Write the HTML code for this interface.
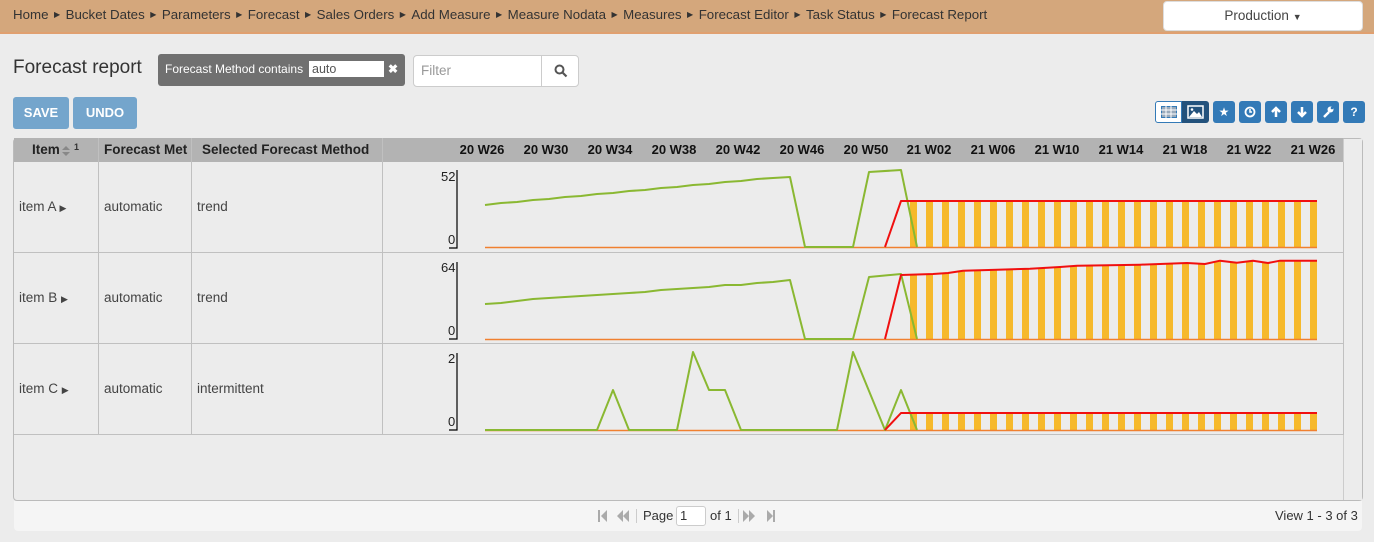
<!DOCTYPE html>
<html><head><meta charset="utf-8"><style>
*{box-sizing:border-box;margin:0;padding:0}
body{width:1374px;height:542px;background:#ececec;font-family:"Liberation Sans",sans-serif;position:relative;overflow:hidden;color:#333}
.a{position:absolute}
.nav{left:0;top:0;width:1374px;height:34px;background:#d4a77c;border-bottom:2px solid #e0a070}
.crumb{left:13px;top:7px;font-size:13.3px;color:#333;white-space:nowrap}
.crumb i{font-style:normal;font-size:8px;margin:0 5.5px;position:relative;top:-2px}
.prod{left:1163px;top:1px;width:200px;height:30px;background:#fff;border-radius:4px;border:1px solid #ddd;text-align:center;font-size:13.5px;line-height:28px;color:#444}
.btn{background:#74a5cc;color:#fff;font-weight:bold;font-size:13px;text-align:center;border-radius:3px}
.ib{width:22px;height:22px;background:#337ab7;border-radius:3px;color:#fff;font-size:12px;text-align:center;line-height:22px;top:101px}
.hd{top:138px;height:24px;background:#b3b3b3;font-weight:bold;font-size:13.5px;color:#222;line-height:24px}
.cell{font-size:13.5px;color:#444}
.vl{width:1px;background:#c0c0c0}
.hl{height:1px;background:#c0c0c0}
.wk{top:138px;font-weight:bold;font-size:13px;line-height:24px;color:#111;width:64px;text-align:center}
</style></head><body>
<div class="a nav"></div>
<div class="a crumb">Home<i>▶</i>Bucket Dates<i>▶</i>Parameters<i>▶</i>Forecast<i>▶</i>Sales Orders<i>▶</i>Add Measure<i>▶</i>Measure Nodata<i>▶</i>Measures<i>▶</i>Forecast Editor<i>▶</i>Task Status<i>▶</i>Forecast Report</div>
<div class="a prod">Production <span style="font-size:9px">▼</span></div>

<div class="a" style="left:13px;top:57px;font-size:19px;color:#333">Forecast report</div>
<div class="a" style="left:158px;top:54px;width:247px;height:32px;background:#707070;border-radius:3px"></div>
<div class="a" style="left:165px;top:62px;font-size:12px;color:#fff">Forecast Method contains</div>
<div class="a" style="left:309px;top:61px;width:75px;height:16px;background:#fff;font-size:12.5px;color:#555;padding-left:3px;line-height:16px">auto</div>
<div class="a" style="left:388px;top:62px;color:#fff;font-size:12px;font-weight:bold">✖</div>
<div class="a" style="left:413px;top:55px;width:166px;height:32px;background:#fff;border:1px solid #ccc;border-radius:4px"></div>
<div class="a" style="left:541px;top:56px;width:1px;height:30px;background:#ccc"></div>
<div class="a" style="left:421px;top:63px;font-size:13.5px;color:#999">Filter</div>
<svg class="a" style="left:554px;top:64px" width="14" height="14"><circle cx="5.5" cy="5.5" r="4" fill="none" stroke="#555" stroke-width="2"/><path d="M8.5 8.5L12.5 12.5" stroke="#555" stroke-width="2.2"/></svg>

<div class="a btn" style="left:13px;top:97px;width:56px;height:32px;line-height:32px">SAVE</div>
<div class="a btn" style="left:73px;top:97px;width:64px;height:32px;line-height:32px">UNDO</div>

<div class="a" style="left:1155px;top:101px;width:27px;height:22px;background:#fff;border:1px solid #337ab7;border-radius:3px 0 0 3px"></div>
<svg class="a" style="left:1161px;top:106px" width="16" height="12"><rect x="0.5" y="0.5" width="15" height="11" fill="#9ab" stroke="#337ab7"/><path d="M0 4H16M0 8H16M5 0V12M10 0V12" stroke="#fff"/></svg>
<div class="a" style="left:1182px;top:101px;width:27px;height:22px;background:#23527c;border-radius:0 3px 3px 0"></div>
<svg class="a" style="left:1187px;top:105px" width="17" height="14"><rect x="1" y="1" width="15" height="12" fill="none" stroke="#fff" stroke-width="1.5"/><path d="M2 12L7 6L10 9L12 7L15 12Z" fill="#fff"/><circle cx="5" cy="4.5" r="1.3" fill="#fff"/></svg>
<div class="a ib" style="left:1213px">★</div>
<div class="a ib" style="left:1239px"><svg width="12" height="12" style="margin-top:5px"><circle cx="6" cy="6" r="4.5" fill="none" stroke="#fff" stroke-width="1.8"/><path d="M6 3V6H8" stroke="#fff" stroke-width="1.5" fill="none"/></svg></div>
<div class="a ib" style="left:1265px"><svg width="12" height="12" style="margin-top:5px"><path d="M6 11V2M2 6L6 2L10 6" stroke="#fff" stroke-width="2.5" fill="none"/></svg></div>
<div class="a ib" style="left:1291px"><svg width="12" height="12" style="margin-top:5px"><path d="M6 1V10M2 6L6 10L10 6" stroke="#fff" stroke-width="2.5" fill="none"/></svg></div>
<div class="a ib" style="left:1317px"><svg width="12" height="12" style="margin-top:5px"><path d="M2 11L7 6" stroke="#fff" stroke-width="2.5"/><circle cx="8.5" cy="3.5" r="3" fill="#fff"/><circle cx="10" cy="2" r="1.3" fill="#337ab7"/></svg></div>
<div class="a ib" style="left:1343px;font-weight:bold">?</div>

<!-- grid -->
<div class="a" style="left:13px;top:138px;width:1350px;height:363px;border:1px solid #bbb;border-radius:4px;background:#ececec"></div>
<div class="a hd" style="left:14px;width:1329px"></div>
<div class="a" style="left:1343px;top:139px;width:19px;height:361px;background:#ececec;border-left:1px solid #ccc"></div>
<div class="a hd" style="left:32px;background:none">Item</div>
<svg class="a" style="left:62px;top:146px" width="8" height="10"><path d="M0 4L4 0L8 4ZM0 6L4 10L8 6Z" fill="#888"/></svg>
<div class="a" style="left:74px;top:142px;font-size:9px;font-weight:bold;color:#333">1</div>
<div class="a hd" style="left:104px;background:none">Forecast Met</div>
<div class="a hd" style="left:202px;background:none">Selected Forecast Method</div>
<div class="a wk" style="left:450px">20 W26</div><div class="a wk" style="left:514px">20 W30</div><div class="a wk" style="left:578px">20 W34</div><div class="a wk" style="left:642px">20 W38</div><div class="a wk" style="left:706px">20 W42</div><div class="a wk" style="left:770px">20 W46</div><div class="a wk" style="left:834px">20 W50</div><div class="a wk" style="left:897px">21 W02</div><div class="a wk" style="left:961px">21 W06</div><div class="a wk" style="left:1025px">21 W10</div><div class="a wk" style="left:1089px">21 W14</div><div class="a wk" style="left:1153px">21 W18</div><div class="a wk" style="left:1217px">21 W22</div><div class="a wk" style="left:1281px">21 W26</div>
<div class="a vl" style="left:98px;top:138px;height:297px"></div>
<div class="a vl" style="left:191px;top:138px;height:297px"></div>
<div class="a vl" style="left:382px;top:138px;height:297px"></div>
<div class="a hl" style="left:14px;top:252px;width:1329px"></div>
<div class="a hl" style="left:14px;top:343px;width:1329px"></div>
<div class="a hl" style="left:14px;top:434px;width:1329px"></div>
<div class="a vl" style="left:1343px;top:162px;height:273px"></div>

<div class="a cell" style="left:19px;top:199px">item A <span style="font-size:9px">▶</span></div>
<div class="a cell" style="left:104px;top:199px">automatic</div>
<div class="a cell" style="left:197px;top:199px">trend</div>
<div class="a cell" style="left:19px;top:290px">item B <span style="font-size:9px">▶</span></div>
<div class="a cell" style="left:104px;top:290px">automatic</div>
<div class="a cell" style="left:197px;top:290px">trend</div>
<div class="a cell" style="left:19px;top:381px">item C <span style="font-size:9px">▶</span></div>
<div class="a cell" style="left:104px;top:381px">automatic</div>
<div class="a cell" style="left:197px;top:381px">intermittent</div>

<div class="a" style="left:441px;top:169px;font-size:13px;color:#222">52</div>
<div class="a" style="left:448px;top:232px;font-size:13px;color:#222">0</div>
<div class="a" style="left:441px;top:260px;font-size:13px;color:#222">64</div>
<div class="a" style="left:448px;top:323px;font-size:13px;color:#222">0</div>
<div class="a" style="left:448px;top:351px;font-size:13px;color:#222">2</div>
<div class="a" style="left:448px;top:414px;font-size:13px;color:#222">0</div>

<svg class="a" style="left:0;top:0" width="1374" height="542">
<defs><pattern id="p" x="910" y="0" width="16" height="600" patternUnits="userSpaceOnUse"><rect width="7" height="600" fill="#f6b92b"/></pattern></defs>
<g stroke="#000" stroke-width="1.2" fill="none">
<path d="M457 170V248H449"/><path d="M457 262V339H449"/><path d="M457 353V430H449"/>
</g>
<rect x="910" y="201" width="407" height="46" fill="url(#p)"/>
<polygon points="910,274.5 933,274 948,273 963,270.7 997,269.7 1030,268.7 1060,267 1077,265.7 1140,264.7 1187,263 1205,264 1220,260.7 1237,262.7 1253,260.7 1268,263 1280,260.7 1317,260.7 1317,339 910,339" fill="url(#p)"/>
<rect x="910" y="413" width="407" height="17" fill="url(#p)"/>
<g stroke="#f08030" stroke-width="1.5"><path d="M485 247.5H1317"/><path d="M485 339.5H1317"/><path d="M485 430.5H1317"/></g>
<g fill="none" stroke="#8ab832" stroke-width="2" stroke-linejoin="round">
<polyline points="485,205 501,203 517,202 533,200 549,199 565,197 581,196 597,194 613,193 629,191 645,190 661,188 677,187 693,185 709,184 725,182 741,181 757,179 773,178 790,177 805,247 853,247 869,172 901,170 917,247"/>
<polyline points="485,304 501,303 517,301 533,299 549,298 565,297 581,296 597,295 613,294 629,293 645,292 661,290 677,289 693,288 709,287 725,285 741,285 757,283 773,282 790,280 805,339 853,339 869,277 901,274 917,339"/>
<polyline points="485,430 597,430 613,390 629,430 677,430 693,352 709,390 725,390 741,430 837,430 853,352 885,430 901,390 917,430"/>
</g>
<g fill="none" stroke="#f01010" stroke-width="2" stroke-linejoin="round">
<polyline points="885,247 901,201 1317,201"/>
<polyline points="885,339 901,275 933,274 948,273 963,270.7 997,269.7 1030,268.7 1060,267 1077,265.7 1140,264.7 1187,263 1205,264 1220,260.7 1237,262.7 1253,260.7 1268,263 1280,260.7 1317,260.7"/>
<polyline points="885,430 901,413 1317,413"/>
</g>
</svg>

<!-- pager -->
<div class="a" style="left:14px;top:501px;width:1348px;height:30px;background:#f5f5f5;border-radius:0 0 4px 4px"></div>
<svg class="a" style="left:596px;top:509px" width="45" height="14" fill="#aaa"><rect x="2" y="1" width="2" height="12"/><path d="M11 1L5 7L11 13Z"/><path d="M27 1L21 7L27 13ZM33 1L27 7L33 13Z"/><rect x="40" y="0" width="1" height="14" fill="#ccc"/></svg>
<div class="a" style="left:643px;top:508px;font-size:13px;color:#333">Page</div>
<div class="a" style="left:676px;top:506px;width:30px;height:20px;background:#fff;border:1px solid #ccc;border-radius:3px;font-size:13px;padding-left:3px;line-height:18px">1</div>
<div class="a" style="left:710px;top:508px;font-size:13px;color:#333">of 1</div>
<svg class="a" style="left:738px;top:509px" width="45" height="14" fill="#aaa"><rect x="0" y="0" width="1" height="14" fill="#ccc"/><path d="M5 1L11 7L5 13ZM11 1L17 7L11 13Z"/><path d="M29 1L35 7L29 13Z"/><rect x="35" y="1" width="2" height="12"/></svg>
<div class="a" style="left:1275px;top:508px;font-size:13px;color:#333">View 1 - 3 of 3</div>
</body></html>
